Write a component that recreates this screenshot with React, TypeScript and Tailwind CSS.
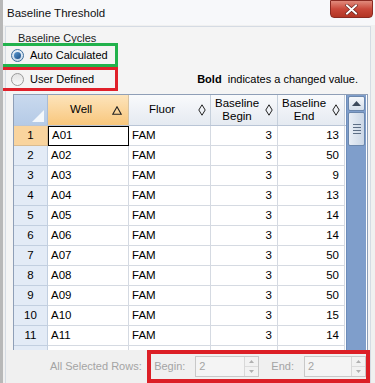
import React from "react";

const rows: [string, string, number, number][] = [
  ["1", "A01", 3, 13],
  ["2", "A02", 3, 50],
  ["3", "A03", 3, 9],
  ["4", "A04", 3, 13],
  ["5", "A05", 3, 14],
  ["6", "A06", 3, 14],
  ["7", "A07", 3, 50],
  ["8", "A08", 3, 50],
  ["9", "A09", 3, 50],
  ["10", "A10", 3, 15],
  ["11", "A11", 3, 14],
  ["12", "A12", 3, 13],
];

function Diamond() {
  return (
    <svg width="8" height="12" viewBox="0 0 8 12" className="shrink-0">
      <path d="M4 0.8 L7.2 6 L4 11.2 L0.8 6 Z" fill="none" stroke="#222" strokeWidth="1" />
    </svg>
  );
}

function Triangle() {
  return (
    <svg width="10" height="9" viewBox="0 0 10 9" className="shrink-0">
      <path d="M5 0.8 L9.2 8.2 L0.8 8.2 Z" fill="none" stroke="#222" strokeWidth="1.1" />
    </svg>
  );
}

function Spinner() {
  return (
    <div className="flex flex-col w-[14px] h-full border-l border-[#d8d8d8]">
      <div className="flex-1 flex items-center justify-center bg-[#f2f2f2] border-b border-[#dcdcdc]">
        <svg width="5" height="3" viewBox="0 0 5 3"><path d="M0 3 L2.5 0 L5 3 Z" fill="#b0b0b0" /></svg>
      </div>
      <div className="flex-1 flex items-center justify-center bg-[#f2f2f2]">
        <svg width="5" height="3" viewBox="0 0 5 3"><path d="M0 0 L2.5 3 L5 0 Z" fill="#b0b0b0" /></svg>
      </div>
    </div>
  );
}

export default function App() {
  return (
    <div
      className="w-[375px] h-[383px] overflow-hidden bg-[#f0f0f0] text-[11.5px] text-black flex flex-col relative border-l-[3px] border-[#b8b8b8]"
      style={{ fontFamily: '"Liberation Sans", Arial, sans-serif' }}
    >
      {/* title bar */}
      <div className="h-[25px] shrink-0 flex items-start justify-between bg-[#f7f8fa]">
        <div className="pt-[5px] pl-[4px] text-[11.5px] text-[#111]">Baseline Threshold</div>
        <div className="mr-[2px] w-[43px] h-[18px] rounded-b-[4px] border border-[#8a2a22] bg-gradient-to-b from-[#e08a7c] via-[#c9483a] to-[#b23524] flex items-center justify-center">
          <svg width="13" height="11" viewBox="0 0 13 11">
            <path d="M2 1.5 L11 9.5 M11 1.5 L2 9.5" stroke="#5a1a14" strokeWidth="3.2" strokeLinecap="square" />
            <path d="M2 1.5 L11 9.5 M11 1.5 L2 9.5" stroke="#ffffff" strokeWidth="2" strokeLinecap="square" />
          </svg>
        </div>
      </div>

      {/* group box */}
      <div className="ml-[2px] mr-[4px] mt-[1px] flex-1 border border-[#d5dbe3] border-b-0 bg-[#f4f4f4] flex flex-col relative">
        <div className="pl-[12px] pt-[3px] h-[16px] text-[11px] text-[#222]">Baseline Cycles</div>

        <div className="flex items-end">
          <div className="flex flex-col ml-[-6px]">
            <div className="w-[118px] h-[24px] border-[3px] border-[#22b24c] flex items-center pl-[8px] gap-[6px]">
              <span className="w-[13px] h-[13px] rounded-full border border-[#3c6e9c] bg-gradient-to-b from-[#e8f0f8] to-[#c8d8e8] flex items-center justify-center">
                <span className="w-[7px] h-[7px] rounded-full bg-gradient-to-br from-[#5c9ad0] to-[#1c4e86]" />
              </span>
              <span className="text-[11px]">Auto Calculated</span>
            </div>
            <div className="w-[118px] h-[24px] border-[3px] border-[#e0202a] flex items-center pl-[8px] gap-[6px]">
              <span className="w-[13px] h-[13px] rounded-full border border-[#9a9a9a] bg-gradient-to-b from-[#e4e4e4] to-[#f8f8f8]" />
              <span className="text-[11px]">User Defined</span>
            </div>
          </div>
          <div className="ml-auto mr-[12px] mb-[4px] text-[11px]">
            <span className="font-bold">Bold</span>
            <span>&nbsp; indicates a changed value.</span>
          </div>
        </div>

        {/* grid */}
        <div className="ml-[7px] mt-[3px] w-[355px] border border-[#8f9fb7] bg-white flex flex-1 overflow-hidden">
          <div className="flex flex-col w-[332px]">
            {/* header */}
            <div className="flex h-[31px] shrink-0 border-b border-[#b9c5d6]">
              <div className="w-[34px] bg-gradient-to-b from-[#c9d9ee] to-[#b5cae6] border-r border-[#a9bcd6] relative">
                <svg width="14" height="14" viewBox="0 0 14 14" className="absolute right-[2px] bottom-[2px]">
                  <path d="M13 1 L13 13 L1 13 Z" fill="#f4f8fc" />
                </svg>
              </div>
              <div className="w-[81px] bg-gradient-to-b from-[#fde4bb] to-[#f8c77c] border-r border-[#d7c3a2] flex items-center pl-[22px] pr-[6px] justify-between">
                <span>Well</span>
                <Triangle />
              </div>
              <div className="w-[82px] bg-gradient-to-b from-[#f9fafc] to-[#e5eaf1] border-r border-[#c5cfdb] flex items-center pl-[20px] pr-[4px] justify-between">
                <span>Fluor</span>
                <Diamond />
              </div>
              <div className="w-[67px] bg-gradient-to-b from-[#f9fafc] to-[#e5eaf1] border-r border-[#c5cfdb] flex items-center pl-[4px] pr-[4px] justify-between">
                <span className="leading-[13px] text-center">Baseline<br />Begin</span>
                <Diamond />
              </div>
              <div className="w-[67px] bg-gradient-to-b from-[#f9fafc] to-[#e5eaf1] border-r border-[#c5cfdb] flex items-center pl-[4px] pr-[4px] justify-between">
                <span className="leading-[13px] text-center">Baseline<br />End</span>
                <Diamond />
              </div>
            </div>
            {/* rows */}
            {rows.map(([n, well, b, e], i) => (
              <div key={n} className="flex h-[20px] shrink-0">
                <div
                  className={
                    "w-[34px] border-r border-b flex items-center justify-center " +
                    (i === 0
                      ? "bg-[#f9d49e] border-[#d9bb90]"
                      : "bg-[#e3ebf6] border-[#c2cfe0]")
                  }
                >
                  {n}
                </div>
                <div
                  className={
                    "w-[81px] border-r border-b flex items-center pl-[3px] " +
                    (i === 0 ? "border-[1.5px] border-black" : "border-[#d5dae2]")
                  }
                >
                  {well}
                </div>
                <div className="w-[82px] border-r border-b border-[#d5dae2] flex items-center pl-[3px]">FAM</div>
                <div className="w-[67px] border-r border-b border-[#d5dae2] flex items-center justify-end pr-[5px]">{b}</div>
                <div className="w-[67px] border-r border-b border-[#d5dae2] flex items-center justify-end pr-[5px]">{e}</div>
              </div>
            ))}
          </div>
          {/* scrollbar */}
          <div className="w-[20px] flex flex-col bg-[#7f9ecb] border-l border-[#6d8dba] pt-[1px] pb-[1px] px-[1px]">
            <div className="h-[15px] rounded-[2px] border border-[#6b87ad] bg-gradient-to-b from-[#f4f7fb] to-[#d4deea] flex items-center justify-center">
              <svg width="9" height="5" viewBox="0 0 9 5"><path d="M0 5 L4.5 0 L9 5 Z" fill="#3c4a5c" /></svg>
            </div>
            <div className="h-[34px] mt-[1px] rounded-[2px] border border-[#6b87ad] bg-gradient-to-r from-[#e8eef6] to-[#cbd7e6] flex flex-col items-center justify-center gap-[2px]">
              <div className="w-[8px] h-px bg-[#5d6f86]" />
              <div className="w-[8px] h-px bg-[#5d6f86]" />
              <div className="w-[8px] h-px bg-[#5d6f86]" />
              <div className="w-[8px] h-px bg-[#5d6f86]" />
            </div>
            <div className="flex-1" />
            <div className="h-[15px] rounded-[2px] border border-[#6b87ad] bg-gradient-to-b from-[#f4f7fb] to-[#d4deea] flex items-center justify-center">
              <svg width="9" height="5" viewBox="0 0 9 5"><path d="M0 0 L4.5 5 L9 0 Z" fill="#3c4a5c" /></svg>
            </div>
          </div>
        </div>

        {/* bottom bar */}
        <div className="absolute left-0 right-0 bottom-0 h-[33px] bg-[#f0f0f0] flex items-center">
          <span className="ml-[44px] text-[11px] text-[#a4a4a4] w-[95px]">All Selected Rows:</span>
          <div className="ml-[4px] h-[33px] w-[224px] border-[4px] border-[#dc1f26] flex items-center pl-[3px] gap-[10px] text-[11px] text-[#a4a4a4]">
            <span>Begin:</span>
            <div className="w-[64px] h-[21px] border border-[#c8c8c8] bg-[#f4f4f4] flex items-center">
              <span className="pl-[3px] flex-1">2</span>
              <Spinner />
            </div>
            <span className="ml-[2px]">End:</span>
            <div className="w-[62px] h-[21px] border border-[#c8c8c8] bg-[#f4f4f4] flex items-center">
              <span className="pl-[3px] flex-1">2</span>
              <Spinner />
            </div>
          </div>
        </div>
      </div>
    </div>
  );
}
